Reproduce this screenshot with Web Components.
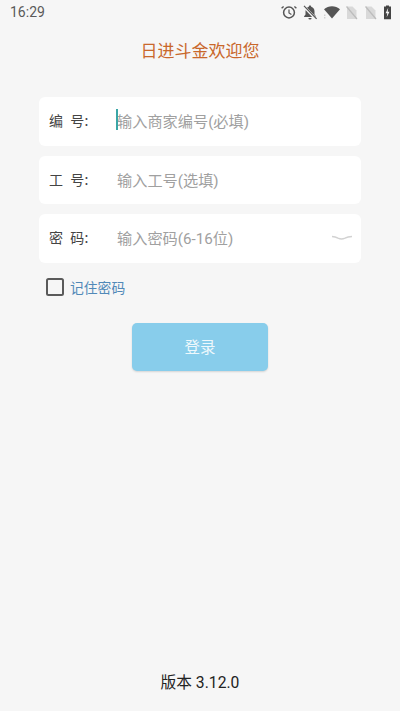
<!DOCTYPE html>
<html><head><meta charset="utf-8">
<style>
html,body{margin:0;height:100%;}
body{background:#f6f6f6;font-family:"Roboto","Noto Sans CJK SC",sans-serif;}
login-page{height:711px;}
</style></head><body>
<login-page></login-page>
<script>
const def=(n,html,init)=>customElements.define(n,class extends HTMLElement{
  constructor(){super();this.attachShadow({mode:'open'}).innerHTML=html;}
  connectedCallback(){init&&init(this);}
});
def('status-bar',`<style>
:host{display:flex;align-items:center;justify-content:space-between;height:24px;padding:0 9px 0 10px;font:14px Roboto,sans-serif;color:#5a5a5a;}
.i{display:flex;align-items:center;gap:0;}
svg{display:block}
</style>
<span>16:29</span>
<div class="i">
<svg width="130" height="24" viewBox="270 0 130 24" style="margin-right:-9px">
 <g fill="none" stroke="#555" stroke-width="1.5"><circle cx="289" cy="12.5" r="5.4"/><path d="M289 9.5v3.5l2.4 1.4" stroke-width="1.2"/><path d="M283.6 6.5l-2 1.8M294.4 6.5l2 1.8" stroke-width="1.4"/></g>
 <path fill="#555" d="M310 5.6c.8 0 1.2.5 1.2 1.2 2.2.6 3.3 2.4 3.3 4.6v3l1.4 1.8v.7h-11.8v-.7l1.4-1.8v-3c0-2.2 1.1-4 3.3-4.6 0-.7.4-1.2 1.2-1.2zM308.4 18h3.2a1.6 1.6 0 0 1-3.2 0z"/>
 <path stroke="#f6f6f6" stroke-width="2.6" d="M304 6.5l12 12.5"/><path stroke="#555" stroke-width="1.2" d="M304 5.8l12.6 13"/>
 <path fill="#555" d="M324 9.3c4.4-4 11.6-4 16 0l-8 9.2z"/>
 <path fill="#c9c9c9" d="M324 17h1.4v1.4H324zM324 14.5h1.4v1.4H324z" opacity=".8"/>
 <path fill="#d9d9d9" d="M347 6.5h5.5l4 4v8.5H347z"/><path stroke="#bcbcbc" stroke-width="1.2" d="M346.5 6.5l10.5 12.5"/>
 <path fill="#d9d9d9" d="M366 6.5h5.5l4 4v8.5H366z"/><path stroke="#bcbcbc" stroke-width="1.2" d="M365.5 6.5l10.5 12.5"/>
 <path fill="#444" d="M384 6.5h2v-1h3v1h2v12.7h-7z"/><path fill="#f6f6f6" d="M388.2 7.8l-2.6 5.4h1.7l-.6 4 2.8-5.5h-1.8z"/>
</svg>
</div>`);
def('page-title',`<style>:host{display:block;text-align:center;font:17px/22px "Noto Sans CJK SC",sans-serif;color:#c9682c;padding-top:15px;}</style><slot></slot>`);
def('field-row',`<style>
:host{display:flex;align-items:center;height:48.5px;background:#fff;border-radius:6px;padding:0 18px 2px 10px;box-sizing:border-box;font:15.2px "Noto Sans CJK SC",sans-serif;color:#a0a0a0;}
.l{width:68px;flex:none;color:#444;font-size:14px;white-space:pre;letter-spacing:.3px;}
.p{flex:1;position:relative;font-family:Roboto,"Noto Sans CJK SC",sans-serif;font-size:15.2px;}
.c{position:absolute;left:-1px;top:0;width:2px;height:21px;background:#3aa6a6;display:none;}
:host([focused]) .c{display:block}
</style><span class="l"><slot name="label"></slot></span><span class="p"><span class="c"></span><slot></slot></span><slot name="end"></slot>`);
def('check-row',`<style>
:host{display:flex;align-items:center;gap:6px;padding-left:7px;font:13.8px "Noto Sans CJK SC",sans-serif;color:#5189b8;}
.b{width:14px;height:14px;border:2px solid #5a5a5a;border-radius:2.5px;background:#f6f6f6;flex:none;}
</style><span class="b"></span><slot></slot>`);
def('login-btn',`<style>
:host{display:flex;align-items:center;justify-content:center;width:136px;height:48px;background:#88cdeb;border-radius:5px;color:#eef8fc;font:15.5px "Noto Sans CJK SC",sans-serif;box-shadow:0 1px 2px rgba(0,0,0,.14);padding-bottom:2px;box-sizing:border-box;}
</style><slot></slot>`);
def('login-page',`<style>
:host{display:flex;flex-direction:column;height:711px;box-sizing:border-box;}
.form{display:flex;flex-direction:column;gap:10px;padding:36px 39px 0;}
.chk{padding:14px 39px 0;}
.btn{display:flex;justify-content:center;padding-top:26px;}
.ver{margin-top:auto;text-align:center;font:15.7px/20px Roboto,"Noto Sans CJK SC",sans-serif;color:#222;padding-bottom:18px;}
svg{display:block}
</style>
<status-bar></status-bar>
<page-title>日进斗金欢迎您</page-title>
<div class="form">
<field-row focused><span slot="label">编  号:</span>输入商家编号(必填)</field-row>
<field-row><span slot="label">工  号:</span>输入工号(选填)</field-row>
<field-row><span slot="label">密  码:</span>输入密码(6-16位)<svg slot="end" width="20" height="10" viewBox="0 0 20 10" style="margin:2px -9px 0 0"><path d="M0 3.5c3 0 4 .4 6 1.6 2 1 5 1 7 0 1.5-.9 3-1.6 7-1.6" fill="none" stroke="#d2d2d2" stroke-width="1.4"/></svg></field-row>
</div>
<div class="chk"><check-row>记住密码</check-row></div>
<div class="btn"><login-btn>登录</login-btn></div>
<div class="ver">版本 3.12.0</div>`);
</script>
</body></html>
